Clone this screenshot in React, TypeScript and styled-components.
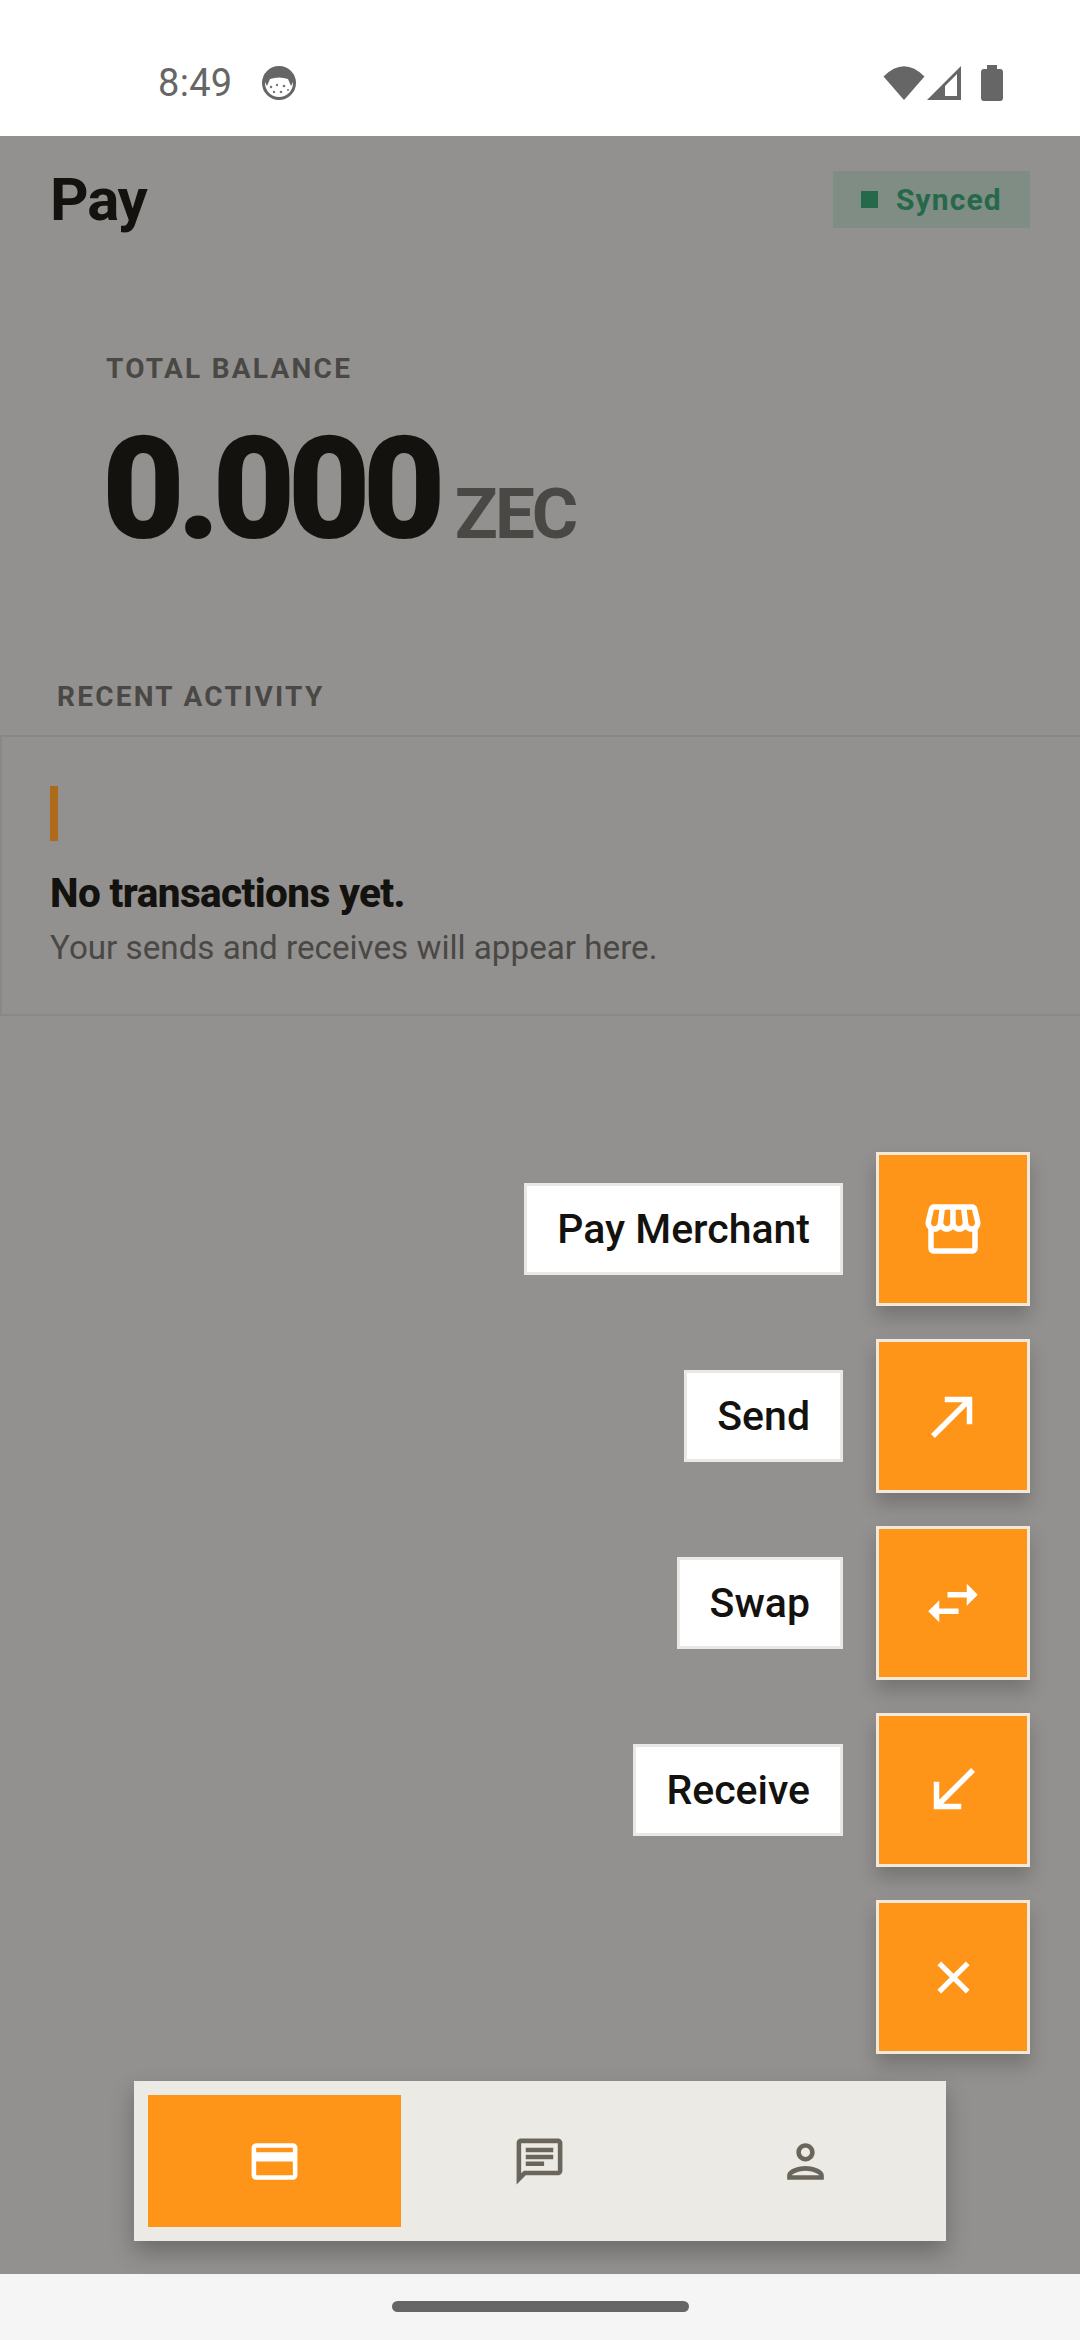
import React from "react";
import styled, { createGlobalStyle } from "styled-components";
import {
  MdOutlineStorefront,
  MdNorthEast,
  MdSwapHoriz,
  MdSouthWest,
  MdOutlineCreditCard,
  MdOutlineChat,
  MdOutlinePerson,
} from "react-icons/md";

const GlobalStyle = createGlobalStyle`
  * {
    box-sizing: border-box;
  }
  html, body {
    margin: 0;
    padding: 0;
    background: #f5f5f5;
    font-family: Roboto, "Liberation Sans", sans-serif;
  }
`;

const Screen = styled.div`
  width: 1080px;
  height: 2340px;
  display: flex;
  flex-direction: column;
  overflow: hidden;
`;

const StatusBar = styled.div`
  height: 136px;
  flex: none;
  background: #fff;
  display: flex;
  align-items: flex-start;
  justify-content: space-between;
  padding: 65px 77px 0 158px;
  color: #666;
`;

const StatusLeft = styled.div`
  display: flex;
  align-items: center;
  gap: 29px;
`;

const Clock = styled.span`
  font-size: 38px;
  line-height: 36px;
  letter-spacing: 0.3px;
`;

const StatusIcons = styled.div`
  display: flex;
  align-items: flex-start;
  gap: 1px;
  svg {
    display: block;
  }
`;

const Main = styled.main`
  position: relative;
  flex: 1;
  background: #92918f;
`;

const Header = styled.header`
  display: flex;
  align-items: center;
  justify-content: space-between;
  padding: 35px 50px 0;
`;

const Title = styled.h1`
  margin: 0;
  font-size: 60px;
  line-height: 57px;
  font-weight: 700;
  letter-spacing: -1.2px;
  color: #14120f;
`;

const SyncBadge = styled.div`
  height: 57px;
  width: 197px;
  display: flex;
  align-items: center;
  gap: 18px;
  padding-left: 28px;
  background: #7f8d84;
  color: #26694a;
  font-size: 30px;
  font-weight: 700;
  letter-spacing: 1.1px;
`;

const SyncDot = styled.span`
  width: 17px;
  height: 17px;
  background: #26694a;
`;

const Balance = styled.section`
  padding: 123px 0 0 106px;
`;

const Eyebrow = styled.div<{ $inset?: number }>`
  font-size: 28px;
  line-height: 36px;
  font-weight: 700;
  letter-spacing: 2.25px;
  color: #4a4845;
  padding-left: ${(p) => p.$inset ?? 0}px;
`;

const AmountRow = styled.div`
  display: flex;
  align-items: baseline;
  gap: 17px;
  margin-top: 30px;
  margin-left: -4px;
`;

const Amount = styled.span`
  font-size: 143px;
  line-height: 144px;
  font-weight: 900;
  letter-spacing: -7.8px;
  color: #14120f;
`;

const Unit = styled.span`
  font-size: 71px;
  font-weight: 700;
  letter-spacing: -3px;
  color: #4a4845;
`;

const Activity = styled.section`
  margin-top: 118px;
`;

const EmptyCard = styled.div`
  margin-top: 20px;
  height: 281px;
  padding: 49px 48px 0;
  border: 2px solid #8a8885;
  border-right: 0;
`;

const AccentBar = styled.div`
  width: 8px;
  height: 55px;
  background: #ad6a1b;
`;

const EmptyTitle = styled.div`
  margin-top: 29px;
  font-size: 40.5px;
  line-height: 46px;
  font-weight: 800;
  letter-spacing: -0.6px;
  color: #14120f;
`;

const EmptyText = styled.div`
  margin-top: 10px;
  font-size: 33.2px;
  line-height: 44px;
  color: #4a4845;
`;

const FabStack = styled.div`
  position: absolute;
  right: 50px;
  bottom: 220px;
  display: flex;
  flex-direction: column;
  align-items: flex-end;
  gap: 33px;
`;

const FabRow = styled.div`
  display: flex;
  align-items: center;
  gap: 33px;
`;

const ActionLabel = styled.div`
  height: 92px;
  display: flex;
  align-items: center;
  padding: 0 30px;
  background: #fff;
  border: 3px solid #eae8e4;
  color: #14120f;
  font-size: 41px;
  font-weight: 500;
`;

const Fab = styled.button`
  width: 154px;
  height: 154px;
  padding: 0;
  display: flex;
  align-items: center;
  justify-content: center;
  background: #ff9518;
  border: 3px solid #f2e9dc;
  color: #fff;
  box-shadow: 0 11px 18px rgba(0, 0, 0, 0.2);
`;

const NavBar = styled.nav`
  position: absolute;
  left: 134px;
  bottom: 33px;
  width: 812px;
  height: 160px;
  display: grid;
  grid-template-columns: repeat(3, 1fr);
  gap: 12px;
  padding: 14px;
  background: #eceae4;
  box-shadow: 0 11px 22px rgba(0, 0, 0, 0.26);
`;

const NavItem = styled.div<{ $active?: boolean }>`
  display: flex;
  align-items: center;
  justify-content: center;
  background: ${(p) => (p.$active ? "#ff9518" : "transparent")};
  color: ${(p) => (p.$active ? "#fff" : "#6b665c")};
`;

const SystemBar = styled.div`
  height: 66px;
  flex: none;
  background: #f5f5f5;
  display: flex;
  justify-content: center;
  padding-top: 27px;
`;

const HomePill = styled.div`
  width: 297px;
  height: 11px;
  border-radius: 6px;
  background: #666;
`;

const CatIcon = () => (
  <svg width="36" height="36" viewBox="0 0 36 36">
    <circle cx="18" cy="18" r="15.5" fill="#fff" stroke="#666" strokeWidth="3" />
    <path d="M3 15 A15.5 15.5 0 0 1 33 15 L30 21 L27 14 Q18 11 9 14 L6 21 Z" fill="#666" />
    <g fill="#777">
      <circle cx="10" cy="22" r="1.3" />
      <circle cx="16" cy="20" r="1.2" />
      <circle cx="23" cy="21" r="1.3" />
      <circle cx="13" cy="27" r="1.2" />
      <circle cx="20" cy="27" r="1.3" />
      <circle cx="27" cy="25" r="1" />
    </g>
  </svg>
);

const WifiIcon = () => (
  <svg width="42" height="36" viewBox="0 0 42 36">
    <path d="M0.5 11.5 Q21 -9 41.5 11.5 L21 35 Z" fill="#666" />
  </svg>
);

const SignalIcon = () => (
  <svg width="36" height="36" viewBox="0 0 36 36">
    <path fillRule="evenodd" d="M35 1 V35 H1 Z M31 9 L19 21 V31 H31 Z" fill="#666" />
  </svg>
);

const BatteryIcon = () => (
  <svg width="22" height="36" viewBox="0 0 22 36" style={{ marginLeft: 18 }}>
    <path d="M6 0 H16 V4 H19 Q22 4 22 7 V33 Q22 36 19 36 H3 Q0 36 0 33 V7 Q0 4 3 4 H6 Z" fill="#666" />
  </svg>
);

const CloseIcon = () => (
  <svg width="55" height="55" viewBox="0 0 24 24">
    <path d="M5.8 5.8 L18.2 18.2 M18.2 5.8 L5.8 18.2" stroke="currentColor" strokeWidth="2.3" fill="none" />
  </svg>
);

const actions = [
  { label: "Pay Merchant", icon: <MdOutlineStorefront size={66} /> },
  { label: "Send", icon: <MdNorthEast size={66} /> },
  { label: "Swap", icon: <MdSwapHoriz size={66} /> },
  { label: "Receive", icon: <MdSouthWest size={66} /> },
];

const App = () => {
  return (
    <Screen>
      <GlobalStyle />
      <StatusBar>
        <StatusLeft>
          <Clock>8:49</Clock>
          <CatIcon />
        </StatusLeft>
        <StatusIcons>
          <WifiIcon />
          <SignalIcon />
          <BatteryIcon />
        </StatusIcons>
      </StatusBar>
      <Main>
        <Header>
          <Title>Pay</Title>
          <SyncBadge>
            <SyncDot />
            Synced
          </SyncBadge>
        </Header>
        <Balance>
          <Eyebrow>TOTAL BALANCE</Eyebrow>
          <AmountRow>
            <Amount>0.000</Amount>
            <Unit>ZEC</Unit>
          </AmountRow>
        </Balance>
        <Activity>
          <Eyebrow $inset={57}>RECENT ACTIVITY</Eyebrow>
          <EmptyCard>
            <AccentBar />
            <EmptyTitle>No transactions yet.</EmptyTitle>
            <EmptyText>Your sends and receives will appear here.</EmptyText>
          </EmptyCard>
        </Activity>
        <FabStack>
          {actions.map((a) => (
            <FabRow key={a.label}>
              <ActionLabel>{a.label}</ActionLabel>
              <Fab>{a.icon}</Fab>
            </FabRow>
          ))}
          <Fab>
            <CloseIcon />
          </Fab>
        </FabStack>
        <NavBar>
          <NavItem $active>
            <MdOutlineCreditCard size={55} />
          </NavItem>
          <NavItem>
            <MdOutlineChat size={55} />
          </NavItem>
          <NavItem>
            <MdOutlinePerson size={55} />
          </NavItem>
        </NavBar>
      </Main>
      <SystemBar>
        <HomePill />
      </SystemBar>
    </Screen>
  );
};

export default App;
